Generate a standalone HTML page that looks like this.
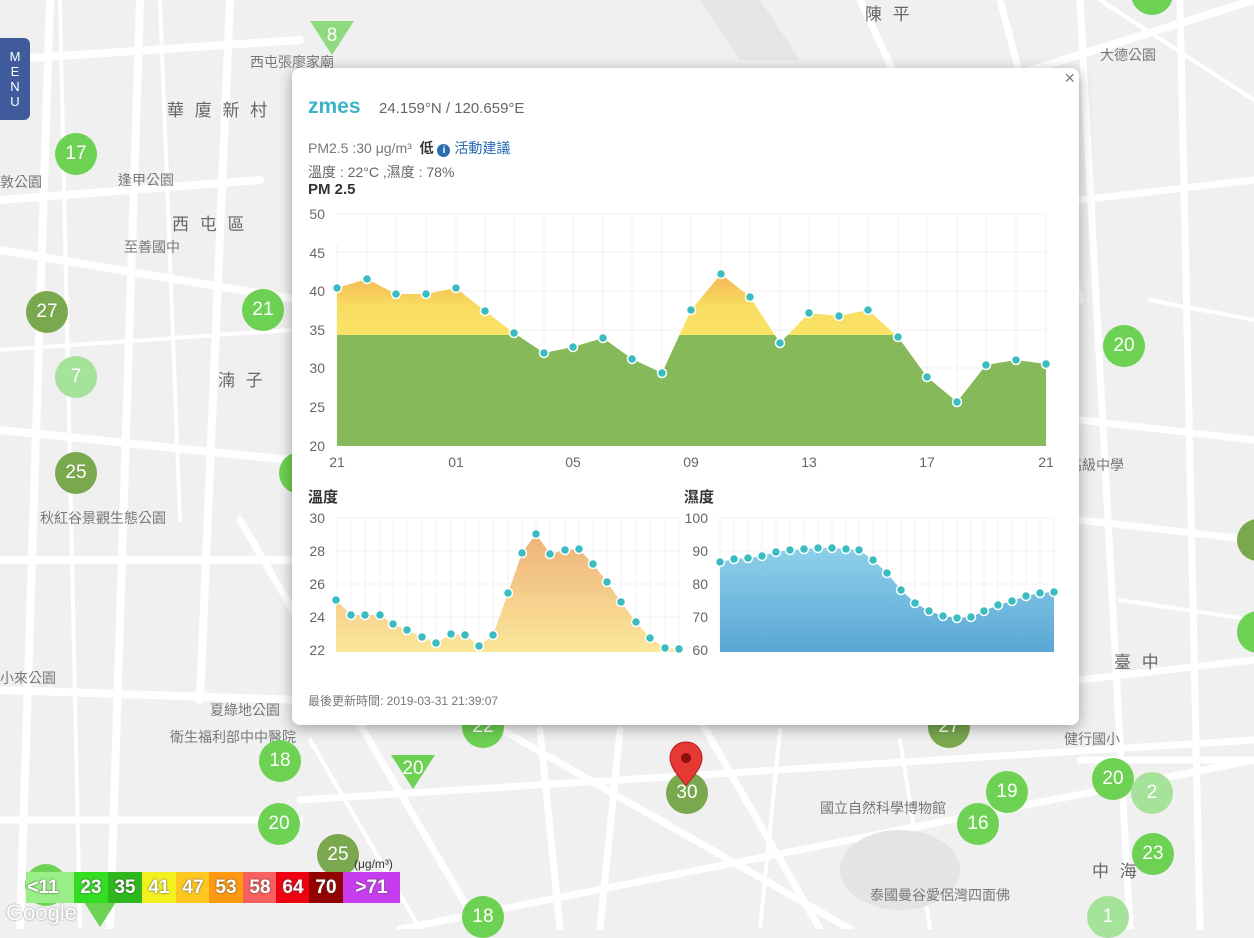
<!DOCTYPE html>
<html><head><meta charset="utf-8">
<style>
*{margin:0;padding:0;box-sizing:border-box}
body{width:1254px;height:929px;overflow:hidden;position:relative;background:#f0f0f0;font-family:"Liberation Sans","Noto Sans CJK TC",sans-serif}
.lbl{position:absolute;color:#777;font-size:14px;white-space:nowrap}
.big{font-size:17px;color:#666;letter-spacing:3px}
.m{position:absolute;width:42px;height:42px;border-radius:50%;color:#fff;font-size:19px;text-align:center;line-height:42px;transform:translate(-50%,-50%)}
.b{background:#6dd153}.o{background:#7aa84f}.p{background:#a5e29a}
.tri{position:absolute;width:0;height:0;border-left:22px solid transparent;border-right:22px solid transparent;border-top:34px solid #8fd97f;transform:translate(-50%,-50%)}
.tt{position:absolute;color:#fff;font-size:19px;transform:translate(-50%,-50%)}
#pop{position:absolute;left:292px;top:68px;width:787px;height:657px;background:#fff;border-radius:8px;box-shadow:0 3px 14px rgba(0,0,0,.35)}
.leg{position:absolute;top:872px;height:31px;width:34px;color:#fff;font-size:19px;font-weight:bold;text-align:center;line-height:31px;text-shadow:0 0 2px #444}
</style></head><body>
<svg width="1254" height="929" style="position:absolute;left:0;top:0">
<g stroke="#fff" fill="none" stroke-linecap="round">
<path d="M0 60 L300 40 M0 200 L260 180 M0 430 L290 460 M0 560 L330 560 M0 690 L300 700 M50 0 L20 929 M140 0 L110 929 M230 0 L200 700 M0 250 L300 300 M300 300 L1254 0" stroke-width="8"/>
<path d="M860 0 L1000 300 M1080 0 L1130 929 M1180 0 L1200 929 M1080 200 L1254 180 M1080 420 L1254 440 M1080 520 L1254 540 M1080 680 L1254 660 M1080 760 L1254 760 M300 800 L1254 740 M400 929 L1254 760 M450 700 L850 929 M540 730 L560 929 M620 730 L600 929 M700 720 L820 929 M240 520 L480 929 M0 820 L300 820 M1000 0 L1080 300" stroke-width="7"/>
<path d="M310 740 L420 929 M780 730 L760 929 M900 740 L930 929 M0 350 L290 330 M160 0 L180 520 M60 0 L80 929 M1100 0 L1254 100 M1150 300 L1254 320 M1120 600 L1254 620" stroke-width="4"/>
</g>
<path d="M700 0 L760 0 L800 60 L740 60 Z" fill="#e6e6e6"/>
<ellipse cx="900" cy="870" rx="60" ry="40" fill="#e4e4e4"/>
</svg>
<div class="lbl big" style="left:167px;top:96px">華 廈 新 村</div>
<div class="lbl big" style="left:172px;top:210px">西 屯 區</div>
<div class="lbl big" style="left:218px;top:366px">湳 子</div>
<div class="lbl big" style="left:865px;top:0px">陳 平</div>
<div class="lbl big" style="left:1114px;top:648px">臺 中</div>
<div class="lbl big" style="left:1092px;top:857px">中 海</div>
<div class="lbl" style="left:118px;top:170px">逢甲公園</div>
<div class="lbl" style="left:124px;top:237px">至善國中</div>
<div class="lbl" style="left:40px;top:508px">秋紅谷景觀生態公園</div>
<div class="lbl" style="left:210px;top:700px">夏綠地公園</div>
<div class="lbl" style="left:170px;top:727px">衛生福利部中中醫院</div>
<div class="lbl" style="left:820px;top:798px">國立自然科學博物館</div>
<div class="lbl" style="left:1064px;top:729px">健行國小</div>
<div class="lbl" style="left:1040px;top:455px">文子高級中學</div>
<div class="lbl" style="left:1100px;top:45px">大德公園</div>
<div class="lbl" style="left:0px;top:172px">敦公園</div>
<div class="lbl" style="left:0px;top:668px">小來公園</div>
<div class="lbl" style="left:870px;top:885px">泰國曼谷愛侶灣四面佛</div>
<div class="lbl" style="left:250px;top:52px">西屯張廖家廟</div>

<div class="tri" style="left:332px;top:38px"></div><div class="tt" style="left:332px;top:36px">8</div>
<div class="m b" style="left:76px;top:154px">17</div>
<div class="m o" style="left:47px;top:312px">27</div>
<div class="m b" style="left:263px;top:310px">21</div>
<div class="m p" style="left:76px;top:377px">7</div>
<div class="m o" style="left:76px;top:473px">25</div>
<div class="m b" style="left:300px;top:473px"></div>
<div class="m b" style="left:1124px;top:346px">20</div>
<div class="m b" style="left:1152px;top:-6px"></div>
<div class="m o" style="left:1258px;top:540px"></div>
<div class="m b" style="left:1258px;top:632px"></div>
<div class="m b" style="left:280px;top:761px">18</div>
<div class="tri" style="left:413px;top:772px;border-top-color:#6dd153"></div><div class="tt" style="left:413px;top:769px">20</div>
<div class="m b" style="left:483px;top:727px">22</div>
<div class="m o" style="left:687px;top:793px">30</div>
<div class="m o" style="left:949px;top:727px">27</div>
<div class="m b" style="left:1007px;top:792px">19</div>
<div class="m b" style="left:978px;top:824px">16</div>
<div class="m b" style="left:1113px;top:779px">20</div>
<div class="m p" style="left:1152px;top:793px">2</div>
<div class="m b" style="left:1153px;top:854px">23</div>
<div class="m b" style="left:279px;top:824px">20</div>
<div class="m o" style="left:338px;top:855px">25</div>
<div class="m b" style="left:483px;top:917px">18</div>
<div class="m p" style="left:1108px;top:917px">1</div>
<div class="m b" style="left:46px;top:885px"></div>
<div class="tri" style="left:100px;top:910px;border-top-color:#6dd153"></div>

<svg width="40" height="56" style="position:absolute;left:666px;top:740px"><path d="M20 2 C8 2 4 12 4 18 C4 30 20 44 20 46 C20 44 36 30 36 18 C36 12 32 2 20 2Z" fill="#e53935" stroke="#b71c1c"/><circle cx="20" cy="18" r="5" fill="#8a1010"/></svg>

<div style="position:absolute;left:0;top:38px;width:30px;height:82px;background:#3f5b9c;border-radius:0 6px 6px 0;color:#fff;font-size:13px;text-align:center;line-height:15px;padding-top:11px">M<br>E<br>N<br>U</div>

<div id="pop">
<div style="position:absolute;right:4px;top:0;font-size:18px;color:#777">×</div>
<div style="position:absolute;left:16px;top:27px;font-size:21px;font-weight:bold;color:#3cb4c8">zmes</div>
<div style="position:absolute;left:87px;top:32px;font-size:15px;color:#666">24.159°N / 120.659°E</div>
<div style="position:absolute;left:16px;top:70px;font-size:14px;color:#777">PM2.5 :30 μg/m³ &nbsp;<b style="color:#333">低</b> <span style="display:inline-block;width:13px;height:13px;border-radius:50%;background:#2a6ab0;color:#fff;font-size:10px;text-align:center;line-height:13px;font-weight:bold">i</span> <span style="color:#2a6ab0">活動建議</span></div>
<div style="position:absolute;left:16px;top:94px;font-size:14px;color:#666">溫度 : 22°C ,濕度 : 78%</div>
<div style="position:absolute;left:16px;top:113px;font-size:15px;font-weight:bold;color:#333">PM 2.5</div>
<div style="position:absolute;left:16px;top:418px;font-size:15px;font-weight:bold;color:#333">溫度</div>
<div style="position:absolute;left:392px;top:418px;font-size:15px;font-weight:bold;color:#333">濕度</div>
<div style="position:absolute;left:16px;top:624px;font-size:12px;color:#777">最後更新時間: 2019-03-31 21:39:07</div>
</div>

<svg width="1254" height="929" style="position:absolute;left:0;top:0" font-family="Liberation Sans" font-size="14" fill="#666">
<defs>
<linearGradient id="gt" x1="0" y1="0" x2="0" y2="1"><stop offset="0" stop-color="#eeb27a"/><stop offset="1" stop-color="#fbe79a"/></linearGradient>
<linearGradient id="gh" x1="0" y1="0" x2="0" y2="1"><stop offset="0" stop-color="#8ed0ea"/><stop offset="1" stop-color="#5aa7d4"/></linearGradient>
<linearGradient id="gy" gradientUnits="userSpaceOnUse" x1="0" y1="270" x2="0" y2="335"><stop offset="0" stop-color="#f2b050"/><stop offset="0.55" stop-color="#f8dc62"/><stop offset="1" stop-color="#fae468"/></linearGradient>
<clipPath id="cg"><rect x="330" y="335" width="730" height="120"/></clipPath>
</defs>
<g stroke="#f1f1f1">
<path d="M337 214H1046M337 252H1046M337 291H1046M337 330H1046M337 368H1046M337 407H1046M337 245V446M367 214V446M396 214V446M426 214V446M456 214V446M485 214V446M514 214V446M544 214V446M573 214V446M603 214V446M632 214V446M662 214V446M691 214V446M721 214V446M750 214V446M780 214V446M809 214V446M839 214V446M868 214V446M898 214V446M927 214V446M957 214V446M986 214V446M1016 214V446M1046 214V446"/>
<path d="M337 518H679M337 551H679M337 584H679M337 617H679M337 518V652M351 518V652M365 518V652M380 518V652M393 518V652M407 518V652M422 518V652M436 518V652M451 518V652M465 518V652M479 518V652M493 518V652M508 518V652M522 518V652M536 518V652M550 518V652M565 518V652M579 518V652M593 518V652M607 518V652M621 518V652M636 518V652M650 518V652M665 518V652M679 518V652"/>
<path d="M720 518H1054M720 551H1054M720 584H1054M720 617H1054M720 518V652M734 518V652M748 518V652M762 518V652M776 518V652M790 518V652M804 518V652M818 518V652M832 518V652M846 518V652M859 518V652M873 518V652M887 518V652M901 518V652M915 518V652M929 518V652M943 518V652M957 518V652M971 518V652M984 518V652M998 518V652M1012 518V652M1026 518V652M1040 518V652M1054 518V652"/>
</g>
<g text-anchor="end"><text x="325" y="219">50</text><text x="325" y="258">45</text><text x="325" y="296">40</text><text x="325" y="335">35</text><text x="325" y="373">30</text><text x="325" y="412">25</text><text x="325" y="451">20</text>
<text x="325" y="523">30</text><text x="325" y="556">28</text><text x="325" y="589">26</text><text x="325" y="622">24</text><text x="325" y="655">22</text>
<text x="708" y="523">100</text><text x="708" y="556">90</text><text x="708" y="589">80</text><text x="708" y="622">70</text><text x="708" y="655">60</text></g>
<g text-anchor="middle"><text x="337" y="467">21</text><text x="456" y="467">01</text><text x="573" y="467">05</text><text x="691" y="467">09</text><text x="809" y="467">13</text><text x="927" y="467">17</text><text x="1046" y="467">21</text></g>
<path d="M337 288L367 279L396 294L426 294L456 288L485 311L514 333L544 353L573 347L603 338L632 359L662 373L691 310L721 274L750 297L780 343L809 313L839 316L868 310L898 337L927 377L957 402L986 365L1016 360L1046 364L1046 446L337 446Z" fill="url(#gy)"/>
<path d="M337 288L367 279L396 294L426 294L456 288L485 311L514 333L544 353L573 347L603 338L632 359L662 373L691 310L721 274L750 297L780 343L809 313L839 316L868 310L898 337L927 377L957 402L986 365L1016 360L1046 364L1046 446L337 446Z" fill="#86b95a" clip-path="url(#cg)"/>
<path d="M336 600L351 615L365 615L380 615L393 624L407 630L422 637L436 643L451 634L465 635L479 646L493 635L508 593L522 553L536 534L550 554L565 550L579 549L593 564L607 582L621 602L636 622L650 638L665 648L679 649L679 652L336 652Z" fill="url(#gt)"/>
<path d="M720 562L734 559L748 558L762 556L776 552L790 550L804 549L818 548L832 548L846 549L859 550L873 560L887 573L901 590L915 603L929 611L943 616L957 618L971 617L984 611L998 605L1012 601L1026 596L1040 593L1054 592L1054 652L720 652Z" fill="url(#gh)"/>
<g fill="#3bbcc0" stroke="#fff" stroke-width="1.5">
<circle cx="337" cy="288" r="4.5"/><circle cx="367" cy="279" r="4.5"/><circle cx="396" cy="294" r="4.5"/><circle cx="426" cy="294" r="4.5"/><circle cx="456" cy="288" r="4.5"/><circle cx="485" cy="311" r="4.5"/><circle cx="514" cy="333" r="4.5"/><circle cx="544" cy="353" r="4.5"/><circle cx="573" cy="347" r="4.5"/><circle cx="603" cy="338" r="4.5"/><circle cx="632" cy="359" r="4.5"/><circle cx="662" cy="373" r="4.5"/><circle cx="691" cy="310" r="4.5"/><circle cx="721" cy="274" r="4.5"/><circle cx="750" cy="297" r="4.5"/><circle cx="780" cy="343" r="4.5"/><circle cx="809" cy="313" r="4.5"/><circle cx="839" cy="316" r="4.5"/><circle cx="868" cy="310" r="4.5"/><circle cx="898" cy="337" r="4.5"/><circle cx="927" cy="377" r="4.5"/><circle cx="957" cy="402" r="4.5"/><circle cx="986" cy="365" r="4.5"/><circle cx="1016" cy="360" r="4.5"/><circle cx="1046" cy="364" r="4.5"/>
<circle cx="336" cy="600" r="4.5"/><circle cx="351" cy="615" r="4.5"/><circle cx="365" cy="615" r="4.5"/><circle cx="380" cy="615" r="4.5"/><circle cx="393" cy="624" r="4.5"/><circle cx="407" cy="630" r="4.5"/><circle cx="422" cy="637" r="4.5"/><circle cx="436" cy="643" r="4.5"/><circle cx="451" cy="634" r="4.5"/><circle cx="465" cy="635" r="4.5"/><circle cx="479" cy="646" r="4.5"/><circle cx="493" cy="635" r="4.5"/><circle cx="508" cy="593" r="4.5"/><circle cx="522" cy="553" r="4.5"/><circle cx="536" cy="534" r="4.5"/><circle cx="550" cy="554" r="4.5"/><circle cx="565" cy="550" r="4.5"/><circle cx="579" cy="549" r="4.5"/><circle cx="593" cy="564" r="4.5"/><circle cx="607" cy="582" r="4.5"/><circle cx="621" cy="602" r="4.5"/><circle cx="636" cy="622" r="4.5"/><circle cx="650" cy="638" r="4.5"/><circle cx="665" cy="648" r="4.5"/><circle cx="679" cy="649" r="4.5"/>
<circle cx="720" cy="562" r="4.5"/><circle cx="734" cy="559" r="4.5"/><circle cx="748" cy="558" r="4.5"/><circle cx="762" cy="556" r="4.5"/><circle cx="776" cy="552" r="4.5"/><circle cx="790" cy="550" r="4.5"/><circle cx="804" cy="549" r="4.5"/><circle cx="818" cy="548" r="4.5"/><circle cx="832" cy="548" r="4.5"/><circle cx="846" cy="549" r="4.5"/><circle cx="859" cy="550" r="4.5"/><circle cx="873" cy="560" r="4.5"/><circle cx="887" cy="573" r="4.5"/><circle cx="901" cy="590" r="4.5"/><circle cx="915" cy="603" r="4.5"/><circle cx="929" cy="611" r="4.5"/><circle cx="943" cy="616" r="4.5"/><circle cx="957" cy="618" r="4.5"/><circle cx="971" cy="617" r="4.5"/><circle cx="984" cy="611" r="4.5"/><circle cx="998" cy="605" r="4.5"/><circle cx="1012" cy="601" r="4.5"/><circle cx="1026" cy="596" r="4.5"/><circle cx="1040" cy="593" r="4.5"/><circle cx="1054" cy="592" r="4.5"/>
</g>
</svg>

<div style="position:absolute;left:6px;top:900px;font-size:22px;color:#fff;text-shadow:0 0 2px #888">Google</div>
<div style="position:absolute;left:354px;top:857px;font-size:12px;color:#333">(μg/m³)</div>
<div class="leg" style="left:26px;background:#99ee88">&lt;11</div>
<div class="leg" style="left:74px;background:#33dd22">23</div>
<div class="leg" style="left:108px;background:#2fb81e">35</div>
<div class="leg" style="left:142px;background:#f4f020">41</div>
<div class="leg" style="left:176px;background:#ffc820">47</div>
<div class="leg" style="left:209px;background:#ff9a10">53</div>
<div class="leg" style="left:243px;background:#f86060">58</div>
<div class="leg" style="left:276px;background:#ee0010">64</div>
<div class="leg" style="left:309px;background:#920000">70</div>
<div class="leg" style="left:343px;background:#c83cf0;width:57px">&gt;71</div>
<div class="leg" style="left:60px;width:14px;background:#99ee88"></div>
</body></html>
